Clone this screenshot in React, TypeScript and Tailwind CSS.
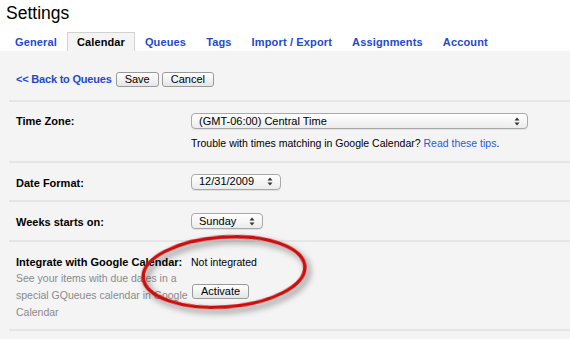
import type { ReactNode } from "react";

const tabs = [
  "General",
  "Calendar",
  "Queues",
  "Tags",
  "Import / Export",
  "Assignments",
  "Account",
];

function Arrows() {
  return (
    <svg width="6" height="9" viewBox="0 0 6 9" className="shrink-0">
      <path d="M3 0.5 L5.5 3.5 H0.5 Z" fill="#333" />
      <path d="M3 8.5 L5.5 5.5 H0.5 Z" fill="#333" />
    </svg>
  );
}

function Select({ value, width }: { value: string; width: string }) {
  return (
    <div
      className={`flex h-[16px] items-center justify-between rounded-[4px] border border-[#a8a8a8] bg-gradient-to-b from-white to-[#ececec] pl-[7px] pr-[7px] text-[11px] text-black shadow-[0_1px_0_rgba(0,0,0,0.08)] ${width}`}
    >
      <span className="leading-none">{value}</span>
      <Arrows />
    </div>
  );
}

function Button({ children }: { children: ReactNode }) {
  return (
    <span className="inline-flex h-[15px] items-center rounded-[3px] border border-[#9a9a9a] bg-gradient-to-b from-white to-[#e6e6e6] px-[8px] text-[11px] leading-none text-black">
      {children}
    </span>
  );
}

function Row({
  label,
  children,
  className = "",
}: {
  label: ReactNode;
  children: ReactNode;
  className?: string;
}) {
  return (
    <div className={`flex border-b-2 border-[#e6e6e6] pl-[7px] ${className}`}>
      <div className="w-[175px] shrink-0">{label}</div>
      <div className="flex-1">{children}</div>
    </div>
  );
}

export default function App() {
  return (
    <div className="relative flex min-h-[339px] w-[570px] flex-col bg-white font-['Liberation_Sans',Arial,sans-serif]">
      <h1 className="pl-[6px] pt-[2px] text-[17.5px] leading-[22px] text-black">
        Settings
      </h1>
      <div className="mt-[8px] flex pl-[5px]">
        {tabs.map((t) =>
          t === "Calendar" ? (
            <span
              key={t}
              className="h-[19px] border border-b-0 border-[#d2d2d2] bg-[#f4f4f4] px-[9px] pt-[3px] text-[11px] font-bold leading-[13px] tracking-[0.1px] text-black"
            >
              {t}
            </span>
          ) : (
            <span
              key={t}
              className="h-[19px] px-[10px] pt-[4px] text-[11px] font-bold leading-[13px] tracking-[0.15px] text-[#2449cf]"
            >
              {t}
            </span>
          )
        )}
      </div>
      <div className="flex-1 bg-[#f4f4f4] pl-[9px]">
        <div className="flex h-[51px] items-center gap-[3px] border-b-2 border-[#e6e6e6] pl-[7px] pt-[8px]">
          <span className="mr-[1px] text-[11px] font-bold tracking-[-0.2px] text-[#2449cf]">
            &lt;&lt; Back to Queues
          </span>
          <Button>Save</Button>
          <Button>Cancel</Button>
        </div>

        <Row
          className="h-[61px] pt-[11px]"
          label={
            <span className="block pt-[2px] text-[11px] font-bold leading-[13px] text-black">
              Time Zone:
            </span>
          }
        >
          <Select value="(GMT-06:00) Central Time" width="w-[337px]" />
          <p className="mt-[8px] text-[10.5px] leading-[13px] text-black">
            Trouble with times matching in Google Calendar?{" "}
            <span className="text-[#2c5ad8]">Read these tips</span>.
          </p>
        </Row>

        <Row
          className="h-[39px] items-center"
          label={
            <span className="text-[11px] font-bold leading-[13px] text-black">
              Date Format:
            </span>
          }
        >
          <Select value="12/31/2009" width="w-[90px]" />
        </Row>

        <Row
          className="h-[40px] items-center"
          label={
            <span className="text-[11px] font-bold leading-[13px] text-black">
              Weeks starts on:
            </span>
          }
        >
          <Select value="Sunday" width="w-[72px]" />
        </Row>

        <Row
          className="h-[89px] pt-[13px]"
          label={
            <div>
              <p className="text-[11px] font-bold leading-[14px] text-black">
                Integrate with Google Calendar:
              </p>
              <p className="mt-[1px] w-[174px] text-[10.5px] leading-[17px] text-[#8a8a8a]">
                See your items with due dates in a special GQueues calendar in
                Google Calendar
              </p>
            </div>
          }
        >
          <p className="text-[10.5px] leading-[14px] text-black">
            Not integrated
          </p>
          <div className="mt-[9px] pl-[1px]">
            <Button>Activate</Button>
          </div>
        </Row>
      </div>

      <svg
        className="pointer-events-none absolute left-0 top-0"
        width="570"
        height="339"
        viewBox="0 0 570 339"
      >
        <defs>
          <filter id="sh" x="-30%" y="-30%" width="160%" height="160%">
            <feDropShadow
              dx="3"
              dy="4"
              stdDeviation="3"
              floodColor="#000"
              floodOpacity="0.5"
            />
          </filter>
        </defs>
        <ellipse
          cx="224"
          cy="272"
          rx="81"
          ry="35"
          transform="rotate(-4 224 272)"
          fill="none"
          stroke="#cc0a0a"
          strokeWidth="3.5"
          filter="url(#sh)"
        />
      </svg>
    </div>
  );
}
